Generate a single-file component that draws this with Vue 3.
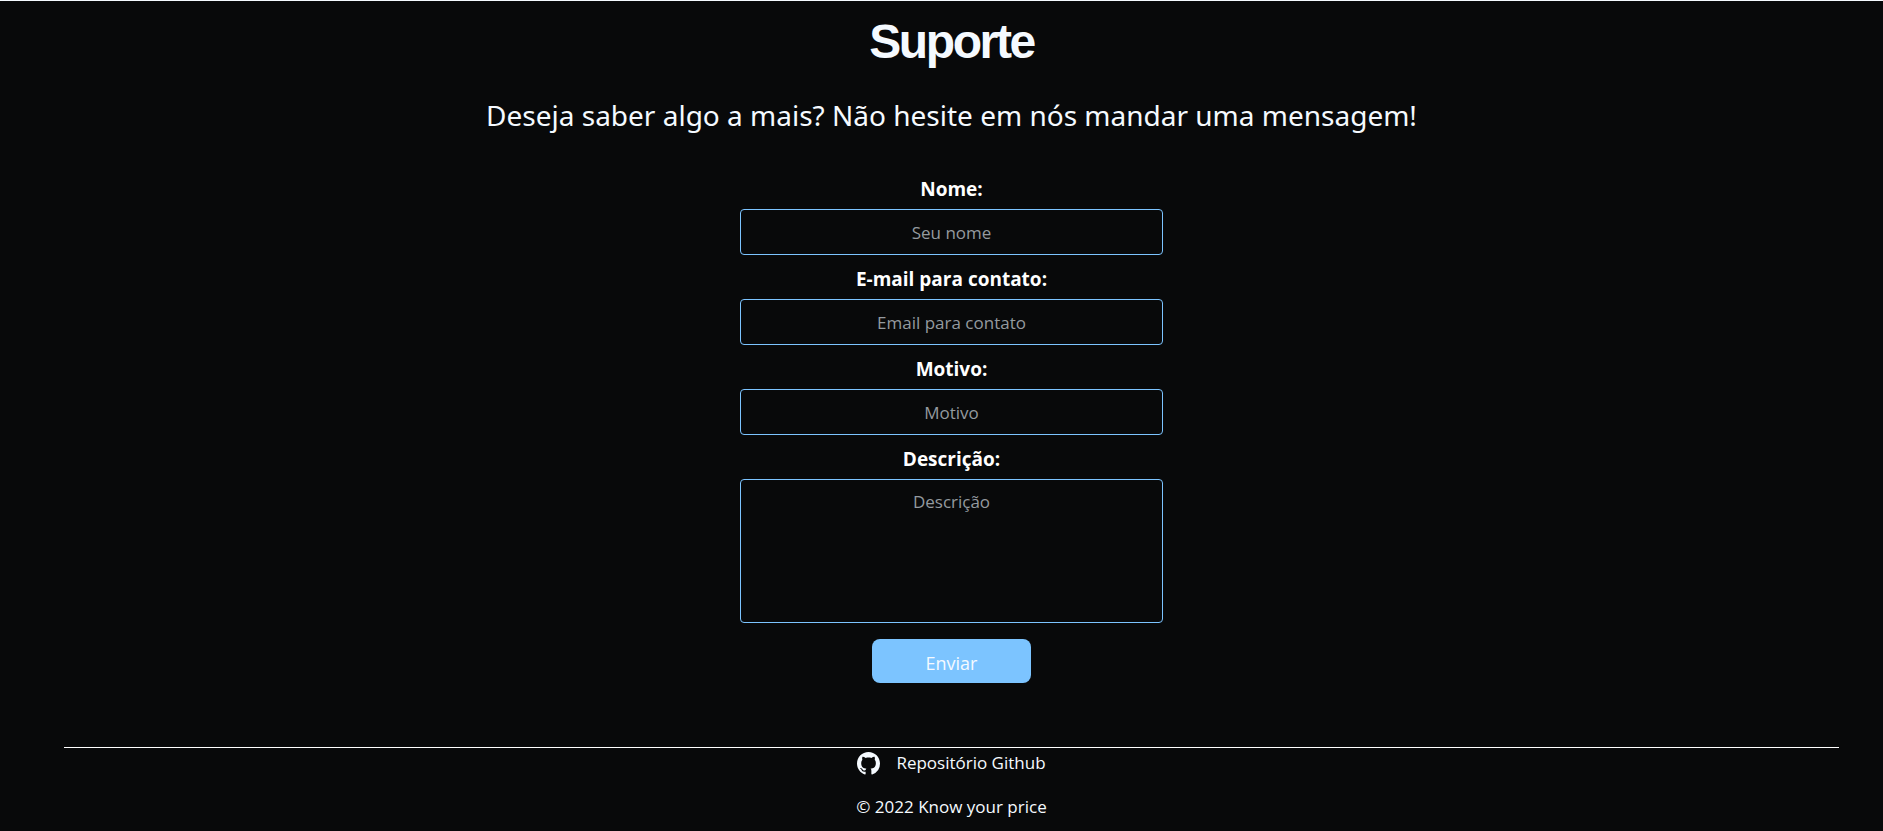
<script setup>
import { reactive } from 'vue'

const fields = [
  { id: 'nome', label: 'Nome:', placeholder: 'Seu nome', type: 'text' },
  { id: 'email', label: 'E-mail para contato:', placeholder: 'Email para contato', type: 'email' },
  { id: 'motivo', label: 'Motivo:', placeholder: 'Motivo', type: 'text' },
]

const form = reactive({ nome: '', email: '', motivo: '', descricao: '' })
</script>

<template>
  <div class="page">
    <main class="support">
      <h1 class="title">Suporte</h1>
      <p class="lead">Deseja saber algo a mais? Não hesite em nós mandar uma mensagem!</p>

      <form class="form" @submit.prevent>
        <div v-for="field in fields" :key="field.id" class="field">
          <label class="label" :for="field.id">{{ field.label }}</label>
          <input
            :id="field.id"
            v-model="form[field.id]"
            class="control"
            :type="field.type"
            :placeholder="field.placeholder"
          />
        </div>
        <div class="field">
          <label class="label" for="descricao">Descrição:</label>
          <textarea
            id="descricao"
            v-model="form.descricao"
            class="control area"
            placeholder="Descrição"
          ></textarea>
        </div>
        <button class="send" type="submit">Enviar</button>
      </form>
    </main>

    <footer class="footer">
      <a class="repo" href="#">
        <svg class="mark" viewBox="0 0 16 16" aria-hidden="true">
          <path
            fill="currentColor"
            d="M8 0C3.58 0 0 3.58 0 8c0 3.54 2.29 6.53 5.47 7.59.4.07.55-.17.55-.38 0-.19-.01-.82-.01-1.49-2.01.37-2.53-.49-2.69-.94-.09-.23-.48-.94-.82-1.13-.28-.15-.68-.52-.01-.53.63-.01 1.08.58 1.23.82.72 1.21 1.87.87 2.33.66.07-.52.28-.87.51-1.07-1.78-.2-3.64-.89-3.64-3.95 0-.87.31-1.59.82-2.15-.08-.2-.36-1.02.08-2.12 0 0 .67-.21 2.2.82.64-.18 1.32-.27 2-.27s1.36.09 2 .27c1.53-1.04 2.2-.82 2.2-.82.44 1.1.16 1.92.08 2.12.51.56.82 1.27.82 2.15 0 3.07-1.87 3.75-3.65 3.95.29.25.54.73.54 1.48 0 1.07-.01 1.93-.01 2.2 0 .21.15.46.55.38A8.01 8.01 0 0 0 16 8c0-4.42-3.58-8-8-8z"
          />
        </svg>
        <span>Repositório Github</span>
      </a>
      <p class="copyright">© 2022 Know your price</p>
    </footer>
  </div>
</template>

<style>
body {
  background: #08090a;
}
</style>

<style scoped>
.page {
  box-sizing: border-box;
  min-height: 100vh;
  padding-left: 20px;
  border-top: 1px solid #f5faff;
  background: #08090a;
  color: #f5faff;
  font-family: 'Segoe UI', 'Open Sans', 'Noto Sans', sans-serif;
}

.support {
  display: flex;
  flex-direction: column;
  align-items: center;
  padding: 12px 20px 0;
  text-align: center;
}

.title {
  margin: 0;
  font-family: 'Liberation Sans', Arial, sans-serif;
  font-size: 48px;
  line-height: 58px;
  letter-spacing: -0.05em;
}

.lead {
  margin: 24px 0 0;
  font-family: 'Segoe UI', 'Noto Sans', sans-serif;
  font-size: 28px;
  line-height: 40px;
}

.form {
  display: flex;
  flex-direction: column;
  align-items: center;
  width: 100%;
  max-width: 423px;
  margin-top: 40px;
}

.field {
  display: flex;
  flex-direction: column;
  width: 100%;
  margin-bottom: 10px;
}

.label {
  margin-bottom: 6px;
  color: #ffffff;
  font-size: 19px;
  font-weight: 700;
  line-height: 28px;
}

.control {
  box-sizing: border-box;
  width: 100%;
  height: 46px;
  margin: 0;
  padding: 10px 16px;
  border: 1px solid #7cc4ff;
  border-radius: 4px;
  outline: none;
  background: transparent;
  color: #f5faff;
  font: inherit;
  font-size: 17px;
  line-height: 24px;
  text-align: center;
}

.control::placeholder {
  color: #949a9f;
  opacity: 1;
}

.area {
  height: 144px;
  resize: none;
}

.send {
  width: 159px;
  height: 44px;
  margin-top: 6px;
  padding: 4px 0 0;
  border: 0;
  border-radius: 8px;
  background: #7cc4ff;
  color: #f5faff;
  font: inherit;
  font-size: 18px;
  cursor: pointer;
}

.footer {
  display: flex;
  flex-direction: column;
  align-items: center;
  margin: 64px 44px 0;
  border-top: 1px solid #ffffff;
  font-size: 17px;
  line-height: 24px;
}

.repo {
  display: flex;
  align-items: center;
  gap: 16px;
  margin-top: 3px;
  color: inherit;
  text-decoration: none;
}

.mark {
  width: 23px;
  height: 23px;
}

.copyright {
  margin: 20px 0 0;
}
</style>
